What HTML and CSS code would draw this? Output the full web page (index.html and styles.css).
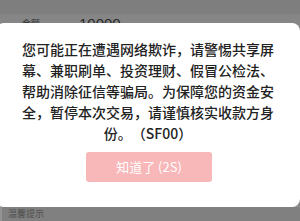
FILE: index.html
```html
<!DOCTYPE html>
<html lang="zh-CN">
<head>
<meta charset="utf-8">
<link rel="stylesheet" href="styles.css">
</head>
<body>
<div class="page">
  <div class="top-band"></div>
  <div class="amount-row">
    <span class="amount-label">金额</span>
    <span class="amount-value">10000</span>
  </div>
  <div class="spacer"></div>
  <div class="tip-row">
    <span class="tip-label">温馨提示</span>
  </div>
</div>
<div class="modal">
  <p class="message">您可能正在遭遇网络欺诈，请警惕共享屏<br>幕、兼职刷单、投资理财、假冒公检法、<br>帮助消除征信等骗局。为保障您的资金安<br>全，暂停本次交易，请谨慎核实收款方身<br>份。（SF00）</p>
  <div class="actions">
    <button class="ok-btn">知道了 (2S)</button>
  </div>
</div>
</body>
</html>
```
FILE: styles.css
```css
html, body {
  margin: 0;
  padding: 0;
}
body {
  width: 300px;
  height: 221px;
  overflow: hidden;
  position: relative;
  background: #868686;
  font-family: "Noto Sans CJK SC", "Noto Sans", sans-serif;
}
.page {
  display: flex;
  flex-direction: column;
  height: 221px;
}
.top-band {
  height: 14px;
  background: #7e7e7e;
}
.amount-row {
  display: flex;
  align-items: flex-start;
  height: 20px;
  padding-left: 22px;
}
.amount-label {
  width: 57px;
  font-size: 9px;
  line-height: 12px;
  color: #2a2a2a;
  margin-top: 4px;
}
.amount-value {
  font-family: "Liberation Sans", sans-serif;
  font-size: 15px;
  line-height: 15px;
  color: #2a2a2a;
  margin-top: 2px;
}
.spacer {
  flex: 1;
}
.tip-row {
  height: 14px;
  border-top: 1px solid #939393;
  border-left: 2px solid #939393;
  background: #808080;
  padding-left: 6px;
  display: flex;
  align-items: center;
}
.tip-label {
  font-size: 9px;
  line-height: 12px;
  color: #4e4e4e;
}
.modal {
  position: absolute;
  top: 23px;
  left: -4px;
  width: 304px;
  height: 184px;
  box-sizing: border-box;
  padding-top: 16px;
  background: #ffffff;
  border-radius: 8px;
  display: flex;
  flex-direction: column;
  align-items: center;
}
.message {
  margin: 0;
  width: 270px;
  font-size: 14px;
  line-height: 21px;
  font-weight: 500;
  color: #222222;
  text-align: center;
  white-space: nowrap;
  text-spacing-trim: space-all;
}
.actions {
  margin-top: 8px;
  display: flex;
  justify-content: center;
  width: 100%;
  padding-left: 2px;
  box-sizing: border-box;
}
.ok-btn {
  width: 126px;
  height: 30px;
  border: none;
  border-radius: 3px;
  background: #f8b7b8;
  color: #ffffff;
  font-family: "Noto Sans CJK SC", "Noto Sans", sans-serif;
  font-size: 13px;
  line-height: 30px;
  padding: 0;
}
```
